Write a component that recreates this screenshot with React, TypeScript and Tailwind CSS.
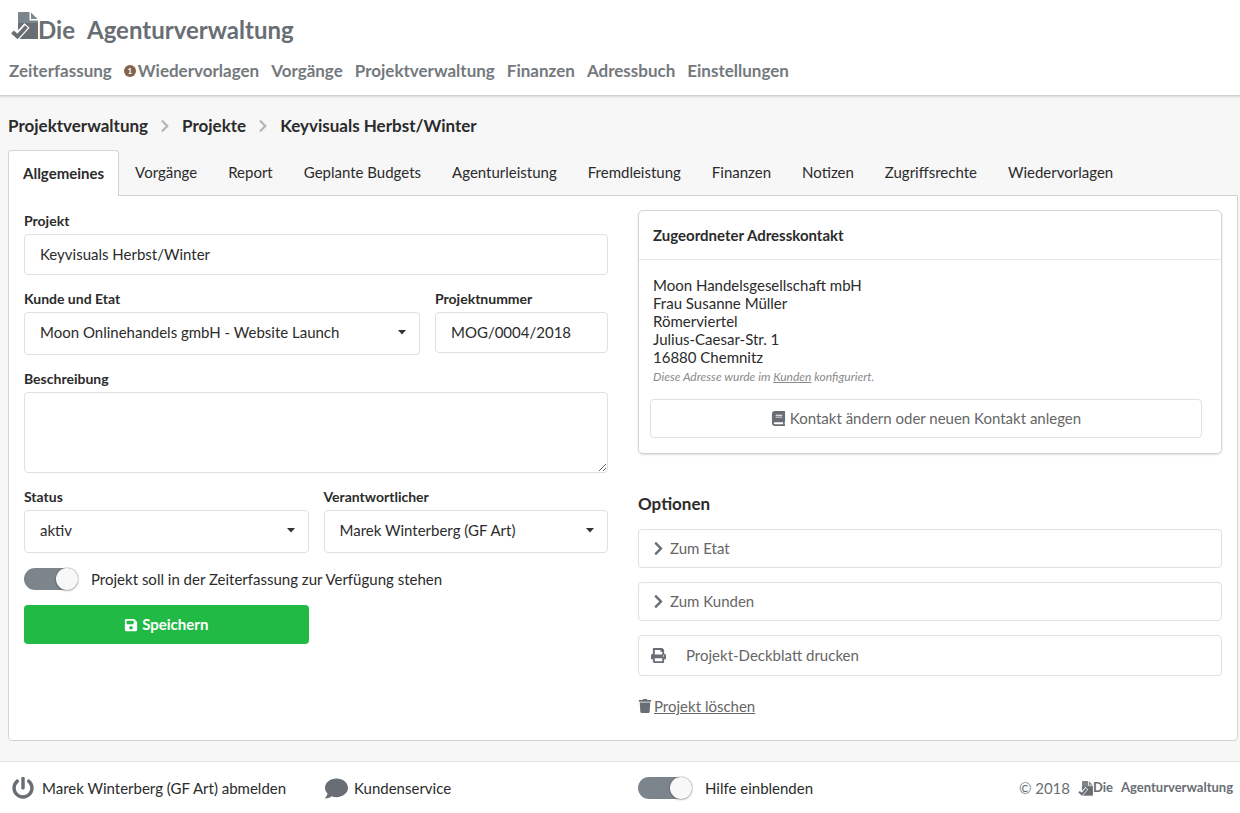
import { useState } from "react";
import {
  FaBook,
  FaChevronRight,
  FaComment,
  FaPowerOff,
  FaPrint,
  FaSave,
  FaTrash,
} from "react-icons/fa";

const navItems = [
  { label: "Zeiterfassung" },
  { label: "Wiedervorlagen", count: 1 },
  { label: "Vorgänge" },
  { label: "Projektverwaltung" },
  { label: "Finanzen" },
  { label: "Adressbuch" },
  { label: "Einstellungen" },
];

const tabs = [
  "Allgemeines",
  "Vorgänge",
  "Report",
  "Geplante Budgets",
  "Agenturleistung",
  "Fremdleistung",
  "Finanzen",
  "Notizen",
  "Zugriffsrechte",
  "Wiedervorlagen",
];

const labelClass = "block h-5 mb-[3px] text-sm leading-5 font-bold";
const fieldClass = "block w-full rounded border border-[#dfe0e1] bg-white px-[15px] text-[15px]";
const optionClass =
  "flex w-full items-center rounded border border-[#dfe0e1] text-[15px] text-[#666]";

function LogoMark({ className }: { className: string }) {
  return (
    <svg viewBox="0 0 27 28" className={className} aria-hidden="true">
      <path d="M8 0h10.5v8.5H27V27H7V1q0-1 1-1z" fill="#7c858c" />
      <path d="M7 11h20v16H7z" fill="#686e73" />
      <path d="M20 0.5l6.5 6.5H20z" fill="#7c858c" />
      <path d="M1.5 19.5L6.5 24 16 13.5" fill="none" stroke="#fff" strokeWidth="7" />
      <path d="M1.5 20L6.5 24.5 15.5 14.5" fill="none" stroke="#686e73" strokeWidth="4" />
    </svg>
  );
}

function Select({ id, options }: { id: string; options: string[] }) {
  return (
    <div className="relative">
      <select id={id} className={`${fieldClass} h-[43px] appearance-none pb-0.5`}>
        {options.map((o) => (
          <option key={o}>{o}</option>
        ))}
      </select>
      <svg
        viewBox="0 0 8 5"
        className="pointer-events-none absolute top-[18px] right-3.5 h-[5px] w-2"
        aria-hidden="true"
      >
        <path d="M0 0h8L4 4.5z" fill="#333" />
      </svg>
    </div>
  );
}

function Toggle({ id, label }: { id: string; label: string }) {
  const [on, setOn] = useState(true);

  return (
    <div className="flex h-6 items-center gap-[13px]">
      <input
        id={id}
        type="checkbox"
        checked={on}
        onChange={(e) => setOn(e.target.checked)}
        className="flex h-[22px] w-[54px] shrink-0 appearance-none items-center rounded-full bg-[#e5e5e5] before:size-[22px] before:rounded-full before:bg-[#f8f8f8] before:shadow-[0_1px_2px_rgba(34,36,38,0.25),0_0_0_1px_rgba(34,36,38,0.12)] checked:justify-end checked:bg-[#7c858c]"
      />
      <label htmlFor={id} className="text-[15px] leading-5">
        {label}
      </label>
    </div>
  );
}

export default function App() {
  const [active, setActive] = useState("Allgemeines");

  return (
    <div className="flex min-h-screen flex-col bg-[#f7f7f7] font-[Lato,sans-serif] text-[15px] text-[#2b2b2b]">
      <header className="border-b border-[#cfcfcf] bg-white pb-3 shadow-[0_1px_2px_rgba(34,36,38,0.15)]">
        <a href="#" className="flex items-start px-[11px] pt-3 text-[#686e73]">
          <LogoMark className="h-7 w-[27px]" />
          <span className="flex gap-3 pt-1 text-2xl leading-7 font-bold">
            <span>Die</span>
            <span>Agenturverwaltung</span>
          </span>
        </a>
        <nav className="mt-[15px] flex gap-3 px-[9px] text-[17px] leading-6 font-bold text-[#74797d]">
          {navItems.map((item) => (
            <a key={item.label} href="#" className="flex items-center gap-0.5">
              {item.count && (
                <span className="flex size-3 items-center justify-center rounded-full bg-[#86624f] text-[8px] leading-3 text-white">
                  {item.count}
                </span>
              )}
              {item.label}
            </a>
          ))}
        </nav>
      </header>

      <main className="flex-1 pr-0.5 pb-5 pl-2">
        <nav className="flex items-center gap-2.5 pt-[18px] text-[17px] leading-6 font-bold">
          <a href="#">Projektverwaltung</a>
          <FaChevronRight className="size-3.5 text-[#b5b5b5]" />
          <a href="#">Projekte</a>
          <FaChevronRight className="size-3.5 text-[#b5b5b5]" />
          <span>Keyvisuals Herbst/Winter</span>
        </nav>

        <div role="tablist" className="mt-3 flex gap-px">
          {tabs.map((tab) => (
            <button
              key={tab}
              type="button"
              role="tab"
              aria-selected={tab === active}
              onClick={() => setActive(tab)}
              className={
                tab === active
                  ? "relative -mb-px h-[46px] rounded-t border border-b-0 border-[#d4d4d5] bg-white px-3.5 font-bold"
                  : "h-[45px] px-[15px]"
              }
            >
              {tab}
            </button>
          ))}
        </div>

        <div className="grid grid-cols-2 gap-[30px] rounded-b border border-[#d4d4d5] bg-white px-[15px] pt-3.5 pb-6">
          <form className="flex flex-col gap-3.5 pt-px" onSubmit={(e) => e.preventDefault()}>
            <div>
              <label htmlFor="projekt" className={labelClass}>Projekt</label>
              <input
                id="projekt"
                defaultValue="Keyvisuals Herbst/Winter"
                className={`${fieldClass} h-[41px] pb-0.5`}
              />
            </div>

            <div className="flex gap-[15px]">
              <div className="grow">
                <label htmlFor="etat" className={labelClass}>Kunde und Etat</label>
                <Select id="etat" options={["Moon Onlinehandels gmbH - Website Launch"]} />
              </div>
              <div className="w-[173px]">
                <label htmlFor="nummer" className={labelClass}>Projektnummer</label>
                <input
                  id="nummer"
                  defaultValue="MOG/0004/2018"
                  className={`${fieldClass} h-[41px] pb-0.5`}
                />
              </div>
            </div>

            <div>
              <label htmlFor="beschreibung" className={labelClass}>Beschreibung</label>
              <textarea id="beschreibung" className={`${fieldClass} h-[81px] resize-y py-2.5`} />
            </div>

            <div className="grid grid-cols-2 gap-[15px]">
              <div>
                <label htmlFor="status" className={labelClass}>Status</label>
                <Select id="status" options={["aktiv"]} />
              </div>
              <div>
                <label htmlFor="verantwortlicher" className={labelClass}>Verantwortlicher</label>
                <Select id="verantwortlicher" options={["Marek Winterberg (GF Art)"]} />
              </div>
            </div>

            <Toggle
              id="zeiterfassung"
              label="Projekt soll in der Zeiterfassung zur Verfügung stehen"
            />

            <div className="grid grid-cols-2 gap-[15px]">
              <button
                type="submit"
                className="flex h-[39px] items-center justify-center gap-1 rounded bg-[#21ba45] font-bold text-white"
              >
                <FaSave className="size-3.5" />
                Speichern
              </button>
            </div>
          </form>

          <div>
            <section className="rounded-[5px] border border-[#d4d4d5] pb-[15px] shadow-[0_1px_2px_rgba(34,36,38,0.15)]">
              <h2 className="border-b border-[#e6e6e7] px-3.5 py-3.5 text-[15px] leading-5 font-bold">
                Zugeordneter Adresskontakt
              </h2>
              <div className="px-3.5 pt-4">
                <address className="leading-[18px] not-italic">
                  Moon Handelsgesellschaft mbH
                  <br />
                  Frau Susanne Müller
                  <br />
                  Römerviertel
                  <br />
                  Julius-Caesar-Str. 1
                  <br />
                  16880 Chemnitz
                </address>
                <p className="text-xs leading-[22px] text-[#8a8a8a] italic">
                  Diese Adresse wurde im <a href="#" className="underline">Kunden</a> konfiguriert.
                </p>
              </div>
              <div className="mt-[11px] pr-[19px] pl-[11px]">
                <button type="button" className={`${optionClass} h-[39px] justify-center gap-1`}>
                  <FaBook className="size-[15px] text-[#686e73]" />
                  Kontakt ändern oder neuen Kontakt anlegen
                </button>
              </div>
            </section>

            <h2 className="mt-[38px] text-[17px] leading-6 font-bold">Optionen</h2>
            <div className="mt-[13px] flex flex-col gap-3.5">
              <button type="button" className={`${optionClass} h-[39px] gap-1 px-3`}>
                <FaChevronRight className="size-[15px] text-[#686e73]" />
                Zum Etat
              </button>
              <button type="button" className={`${optionClass} h-[39px] gap-1 px-3`}>
                <FaChevronRight className="size-[15px] text-[#686e73]" />
                Zum Kunden
              </button>
              <button type="button" className={`${optionClass} h-[41px] gap-5 px-3`}>
                <FaPrint className="size-[15px] text-[#686e73]" />
                Projekt-Deckblatt drucken
              </button>
            </div>
            <a href="#" className="mt-5 flex items-center gap-0.5 leading-5 text-[#666]">
              <FaTrash className="size-3.5 text-[#686e73]" />
              <span className="underline">Projekt löschen</span>
            </a>
          </div>
        </div>
      </main>

      <footer className="grid h-[53px] grid-cols-2 items-center gap-[31px] border-t border-[#e3e3e3] bg-white pr-[7px] pl-3">
        <div className="grid grid-cols-2 gap-[31px]">
          <a href="#" className="flex items-center gap-2 whitespace-nowrap">
            <FaPowerOff className="size-[22px] text-[#686e73]" />
            Marek Winterberg (GF Art) abmelden
          </a>
          <a href="#" className="flex items-center gap-1.5">
            <FaComment className="size-[23px] text-[#686e73]" />
            Kundenservice
          </a>
        </div>
        <div className="flex items-center justify-between">
          <Toggle id="hilfe" label="Hilfe einblenden" />
          <a href="#" className="flex items-center text-[#686e73]">
            © 2018
            <LogoMark className="ml-2 size-[15px]" />
            <span className="flex gap-2 text-[13px] font-bold">
              <span>Die</span>
              <span>Agenturverwaltung</span>
            </span>
          </a>
        </div>
      </footer>
    </div>
  );
}
